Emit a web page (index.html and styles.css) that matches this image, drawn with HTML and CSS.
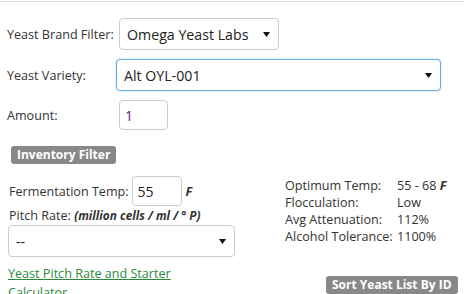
FILE: index.html
```
<!DOCTYPE html>
<html lang="en">
<head>
  <meta charset="UTF-8">
  <title>Yeast Selector</title>
  <link rel="stylesheet" href="styles.css">
</head>
<body>
  <div class="page">
    <div class="row row-brand">
      <label class="label">Yeast Brand Filter:</label>
      <div class="select select-brand">
        <span>Omega Yeast Labs</span>
        <svg class="arrow" width="7" height="5" viewBox="0 0 7 5"><path d="M0 0h7L3.5 5z" fill="#111"/></svg>
      </div>
    </div>
    <div class="row row-variety">
      <label class="label">Yeast Variety:</label>
      <div class="select select-variety focus">
        <span>Alt OYL-001</span>
        <svg class="arrow" width="7" height="5" viewBox="0 0 7 5"><path d="M0 0h7L3.5 5z" fill="#111"/></svg>
      </div>
    </div>
    <div class="row row-amount">
      <label class="label">Amount:</label>
      <div class="input amount">1</div>
    </div>

    <div class="badge badge-inventory">Inventory Filter</div>

    <div class="lower">
      <div class="left">
        <div class="ferm">
          <span>Fermentation Temp:</span>
          <div class="input temp">55</div>
          <b class="unit">F</b>
        </div>
        <div class="pitch-label">Pitch Rate: <b class="units">(million cells / ml / ° P)</b></div>
        <div class="select select-pitch">
          <span>--</span>
          <svg class="arrow" width="7" height="5" viewBox="0 0 7 5"><path d="M0 0h7L3.5 5z" fill="#111"/></svg>
        </div>
        <a class="calc-link" href="#">Yeast Pitch Rate and Starter Calculator</a>
      </div>
      <div class="right">
        <table class="stats">
          <tr><td>Optimum Temp:</td><td>55 - 68 <b class="unit">F</b></td></tr>
          <tr><td>Flocculation:</td><td>Low</td></tr>
          <tr><td>Avg Attenuation:</td><td>112%</td></tr>
          <tr><td>Alcohol Tolerance:</td><td>1100%</td></tr>
        </table>
        <div class="badge badge-sort">Sort Yeast List By ID</div>
      </div>
    </div>
  </div>
</body>
</html>
```
FILE: styles.css
```
body {
  margin: 0;
  font-family: "Open Sans", Arial, sans-serif;
  font-size: 12.6px;
  color: #333;
  background: #fff;
  overflow: hidden;
}
.page {
  margin-top: 1px;
  border-top: 1px solid #ddd;
  height: 292px;
  overflow: hidden;
}
.row {
  display: flex;
  align-items: center;
  padding-left: 7px;
}
.label {
  display: block;
}
.row-brand {
  margin-top: 16px;
}
.row-brand .label { width: 112px; }
.row-variety {
  margin-top: 9px;
}
.row-variety .label { width: 109px; }
.row-amount {
  margin-top: 9px;
}
.row-amount .label { width: 112px; }

.select {
  box-sizing: border-box;
  height: 32px;
  border: 1px solid #ccc;
  border-radius: 4px;
  display: flex;
  align-items: center;
  justify-content: space-between;
  padding: 0 8px 0 7px;
  font-size: 14.2px;
  color: #222;
  background: #fff;
}
.select-brand { width: 160px; }
.select-variety { width: 325px; }
.select.focus {
  border-color: #66afe9;
  box-shadow: 0 0 2px rgba(102,175,233,0.6);
}
.input {
  box-sizing: border-box;
  height: 30px;
  border: 1px solid #ccc;
  border-radius: 4px;
  width: 49px;
  padding: 0 5px;
  display: flex;
  align-items: center;
  font-size: 14px;
}
.amount { color: #551a8b; }

.badge {
  display: inline-block;
  background: #888;
  color: #fff;
  font-weight: bold;
  font-size: 12px;
  line-height: 18px;
  padding: 0 6px;
  border-radius: 3px;
}
.badge-inventory {
  margin: 16px 0 0 11px;
}

.lower {
  display: flex;
  margin-top: 12px;
}
.left {
  width: 240px;
  padding-left: 8px;
}
.ferm {
  display: flex;
  align-items: center;
  padding-left: 1px;
}
.ferm .temp {
  margin-left: 3px;
  width: 50px;
  color: #222;
}
.unit {
  font-style: italic;
  font-weight: bold;
  color: #333;
}
.ferm .unit { margin-left: 4px; }
.pitch-label {
  margin-top: 1px;
  padding-left: 1px;
}
.units {
  font-style: italic;
  font-size: 11.8px;
}
.select-pitch {
  width: 227px;
  margin-top: 1px;
  font-size: 14px;
}
.calc-link {
  display: block;
  margin-top: 7px;
  color: #2a8a3a;
  line-height: 19px;
  width: 180px;
}
.right {
  flex: 1;
  padding-left: 37px;
  padding-top: 1px;
}
.stats {
  border-collapse: collapse;
}
.stats td {
  padding: 0;
  line-height: 17px;
}
.stats td:first-child { width: 112px; }
.badge-sort {
  margin: 31px 0 0 41px;
}
```
